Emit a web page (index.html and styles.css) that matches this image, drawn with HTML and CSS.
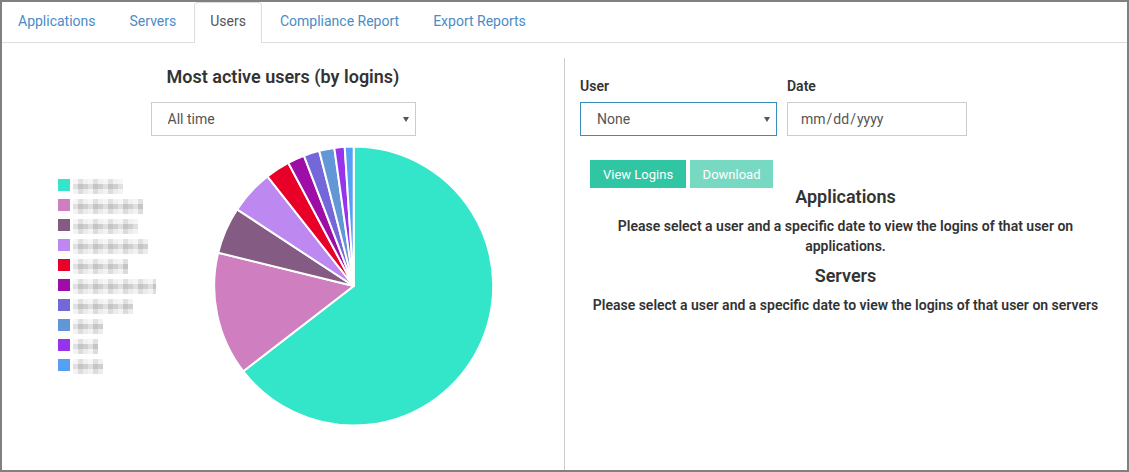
FILE: index.html
```html
<!DOCTYPE html>
<html lang="en">
<head>
    <meta charset="UTF-8">
    <meta name="viewport" content="width=device-width, initial-scale=1.0">
    <title>Users</title>
    <link rel="stylesheet" href="styles.css">
</head>
<body>
    <div class="frame">
        <ul class="tabs">
            <li><a href="#">Applications</a></li>
            <li><a href="#">Servers</a></li>
            <li class="active"><a href="#">Users</a></li>
            <li><a href="#">Compliance Report</a></li>
            <li><a href="#">Export Reports</a></li>
        </ul>

        <div class="content">
            <div class="left">
                <h1>Most active users (by logins)</h1>
                <select class="field range">
                    <option>All time</option>
                </select>
                <div class="chart">
                    <ul class="legend">
                        <li><i class="c1"></i><span class="blurred" style="width: 50px"></span></li>
                        <li><i class="c2"></i><span class="blurred" style="width: 70px"></span></li>
                        <li><i class="c3"></i><span class="blurred" style="width: 65px"></span></li>
                        <li><i class="c4"></i><span class="blurred" style="width: 75px"></span></li>
                        <li><i class="c5"></i><span class="blurred" style="width: 55px"></span></li>
                        <li><i class="c6"></i><span class="blurred" style="width: 83px"></span></li>
                        <li><i class="c7"></i><span class="blurred" style="width: 60px"></span></li>
                        <li><i class="c8"></i><span class="blurred" style="width: 30px"></span></li>
                        <li><i class="c9"></i><span class="blurred" style="width: 25px"></span></li>
                        <li><i class="c10"></i><span class="blurred" style="width: 30px"></span></li>
                    </ul>
                    <svg class="pie" viewBox="-140.7 -140 282 280" width="282" height="280">
                        <path fill="#33e6c9" d="M0 0L0 -139.5A139.5 139.5 0 1 1 -110.4 85.3Z"/>
                        <path fill="#cf7fc0" d="M0 0L-110.4 85.3A139.5 139.5 0 0 1 -135.5 -33.3Z"/>
                        <path fill="#845b83" d="M0 0L-135.5 -33.3A139.5 139.5 0 0 1 -116.6 -76.6Z"/>
                        <path fill="#bd88f0" d="M0 0L-116.6 -76.6A139.5 139.5 0 0 1 -86.3 -109.6Z"/>
                        <path fill="#e80028" d="M0 0L-86.3 -109.6A139.5 139.5 0 0 1 -65.5 -123.2Z"/>
                        <path fill="#9e0ea6" d="M0 0L-65.5 -123.2A139.5 139.5 0 0 1 -49.8 -130.3Z"/>
                        <path fill="#7367d9" d="M0 0L-49.8 -130.3A139.5 139.5 0 0 1 -34.5 -135.2Z"/>
                        <path fill="#6296d6" d="M0 0L-34.5 -135.2A139.5 139.5 0 0 1 -19.4 -138.1Z"/>
                        <path fill="#9733ea" d="M0 0L-19.4 -138.1A139.5 139.5 0 0 1 -9 -139.2Z"/>
                        <path fill="#579ef5" d="M0 0L-9 -139.2A139.5 139.5 0 0 1 0 -139.5Z"/>
                    </svg>
                </div>
            </div>

            <div class="right">
                <div class="filters">
                    <div class="group">
                        <label>User</label>
                        <select class="field user">
                            <option>None</option>
                        </select>
                    </div>
                    <div class="group">
                        <label>Date</label>
                        <input class="field date" type="date">
                    </div>
                </div>
                <div class="buttons">
                    <button class="btn">View Logins</button>
                    <button class="btn disabled">Download</button>
                </div>
                <div class="results">
                    <h2>Applications</h2>
                    <p>Please select a user and a specific date to view the logins of that user on applications.</p>
                    <h2>Servers</h2>
                    <p>Please select a user and a specific date to view the logins of that user on servers</p>
                </div>
            </div>
        </div>
    </div>
</body>
</html>
```
FILE: styles.css
```css
* {
    box-sizing: border-box;
}
body {
    font-family: Roboto, "Liberation Sans", sans-serif;
    font-size: 14px;
    color: #333;
    background-color: #fff;
    margin: 0;
}
.frame {
    height: 472px;
    border: 2px solid #808080;
    display: flex;
    flex-direction: column;
    overflow: hidden;
}

/* tabs */
.tabs {
    list-style: none;
    margin: 0;
    padding: 0;
    height: 41px;
    display: flex;
    border-bottom: 1px solid #ddd;
}
.tabs a {
    display: block;
    height: 41px;
    padding: 10px 15px 0;
    margin-right: 2px;
    color: #4a8cc7;
    text-decoration: none;
    border: 1px solid transparent;
    border-bottom: none;
}
.tabs .active a {
    color: #555;
    background-color: #fff;
    border-color: #ddd;
    border-radius: 4px 4px 0 0;
}

/* layout */
.content {
    flex: 1;
    display: flex;
    min-height: 0;
    padding-top: 15px;
}
.left {
    width: 563px;
    border-right: 1px solid #ccc;
    display: flex;
    flex-direction: column;
    align-items: center;
}
.right {
    flex: 1;
    padding: 0 16px 0 15px;
}

/* left side */
h1 {
    font-size: 18px;
    font-weight: 600;
    line-height: 20px;
    margin: 9px 0 15px;
}
.field {
    height: 34px;
    font-family: inherit;
    font-size: 14px;
    color: #555;
    background-color: #fff;
    border: 1px solid #ccc;
    border-radius: 0;
    padding: 6px 12px;
    outline: none;
}
select.field {
    appearance: none;
    padding-left: 16px;
    background-image: url("data:image/svg+xml,%3Csvg xmlns='http://www.w3.org/2000/svg' width='6' height='5'%3E%3Cpath fill='%23555' d='M0 0H6L3 5Z'/%3E%3C/svg%3E");
    background-repeat: no-repeat;
    background-position: right 6px top 14px;
}
.range {
    width: 265px;
}
.chart {
    width: 100%;
    display: flex;
    margin-top: 10px;
}
.legend {
    list-style: none;
    margin: 33px 0 0 56px;
    padding: 0;
    width: 155px;
}
.legend li {
    display: flex;
    height: 20px;
}
.legend i {
    width: 12px;
    height: 12px;
    margin-right: 3px;
}
.blurred {
    height: 15px;
    background-color: #e6e6e6;
    background-image:
        repeating-linear-gradient(90deg, rgba(255, 255, 255, 0.35) 0 5px, rgba(150, 150, 160, 0.18) 5px 10px, rgba(255, 255, 255, 0) 10px 15px),
        linear-gradient(#f1f1f1 0 5px, #cfcfcf 5px 10px, #ececec 10px);
}
.c1 { background-color: #33e6c9; }
.c2 { background-color: #cf7fc0; }
.c3 { background-color: #845b83; }
.c4 { background-color: #bd88f0; }
.c5 { background-color: #e80028; }
.c6 { background-color: #9e0ea6; }
.c7 { background-color: #7367d9; }
.c8 { background-color: #6296d6; }
.c9 { background-color: #9733ea; }
.c10 { background-color: #579ef5; }
.pie {
    flex: none;
    stroke: #fff;
    stroke-width: 2;
    stroke-linejoin: round;
}

/* right side */
.filters {
    display: flex;
    gap: 10px;
}
label {
    display: block;
    font-weight: 600;
    line-height: 20px;
    margin: 18px 0 6px;
}
.user {
    width: 197px;
    border-color: #3c8dbc;
}
.date {
    width: 180px;
}
.date::-webkit-calendar-picker-indicator {
    display: none;
}
.buttons {
    display: flex;
    gap: 4px;
    margin: 24px 0 0 10px;
}
.btn {
    height: 28px;
    padding: 0 13px;
    font-family: inherit;
    font-size: 13px;
    color: #fff;
    background-color: #30c5a3;
    border: none;
}
.btn.disabled {
    padding: 0 12.5px;
    opacity: 0.65;
}
.results {
    text-align: center;
    margin-top: -1px;
}
h2 {
    font-size: 18px;
    font-weight: 600;
    line-height: 20px;
    margin: 0;
}
.results p {
    font-weight: 600;
    line-height: 20px;
    margin: 9px 0 10px;
}
```
